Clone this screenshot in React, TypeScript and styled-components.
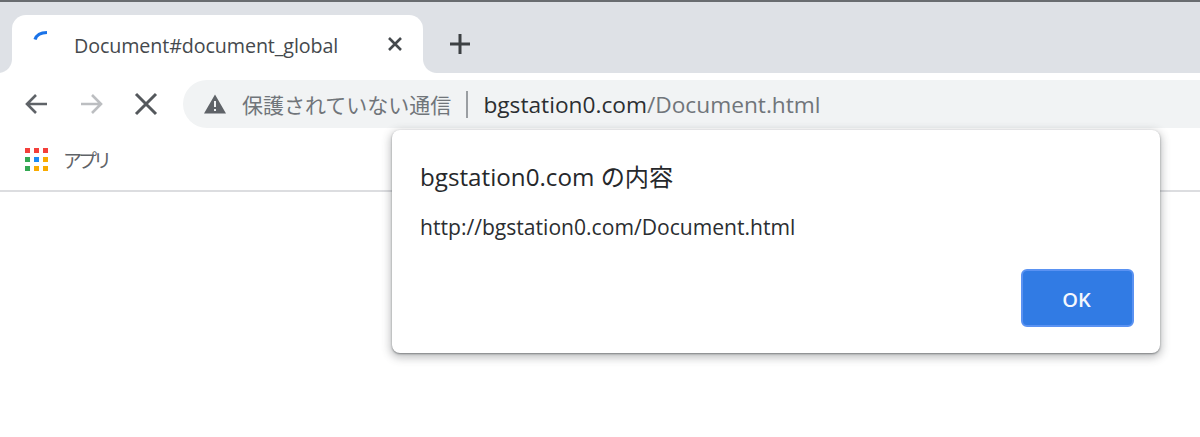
import React from "react";
import styled, { createGlobalStyle } from "styled-components";

const Global = createGlobalStyle`
  html, body { margin: 0; padding: 0; background: #fff; }
  body { width: 1200px; height: 437px; overflow: hidden; font-family: "Open Sans", "Noto Sans CJK JP", sans-serif; }
  #root { width: 1200px; height: 437px; }
`;

const Page = styled.div`
  position: relative;
  width: 1200px;
  height: 437px;
  overflow: hidden;
  background: #fff;
`;

const TabStrip = styled.div`
  box-sizing: border-box;
  border-top: 2px solid #696c70;
  height: 73px;
  padding: 13px 0 0 12px;
  background: #dee1e6;
  display: flex;
  align-items: flex-start;
`;

const Tab = styled.div`
  position: relative;
  box-sizing: border-box;
  width: 411px;
  height: 58px;
  background: #fff;
  border-radius: 14px 14px 0 0;
  display: flex;
  align-items: center;
  padding: 0 20px 0 21px;

  &::before, &::after {
    content: "";
    position: absolute;
    bottom: 0;
    width: 14px;
    height: 14px;
  }
  &::before {
    left: -14px;
    background: radial-gradient(circle at 0 0, #dee1e6 13.5px, #fff 14.5px);
  }
  &::after {
    right: -14px;
    background: radial-gradient(circle at 100% 0, #dee1e6 13.5px, #fff 14.5px);
  }
`;

const Spinner = styled.svg`
  align-self: flex-start;
  margin-top: 14px;
  flex: none;
`;

const TabTitle = styled.span`
  flex: 1;
  margin-left: 25px;
  padding-top: 2px;
  font-size: 19.7px;
  letter-spacing: -0.1px;
  color: #45494d;
  white-space: nowrap;
`;

const NewTab = styled.div`
  margin: 18px 0 0 26px;
  width: 22px;
  height: 28px;
  display: flex;
`;

const Toolbar = styled.div`
  height: 70px;
  box-sizing: border-box;
  padding: 7px 0 15px 0;
  display: flex;
  align-items: center;
`;

const NavButton = styled.div<{ $w: number }>`
  width: ${(p) => p.$w}px;
  height: 48px;
  display: flex;
  align-items: center;
  justify-content: center;
`;

const Omnibox = styled.div`
  flex: 1;
  height: 48px;
  margin-left: 2px;
  background: #f1f3f4;
  border-radius: 24px 0 0 24px;
  display: flex;
  align-items: center;
  padding-left: 21px;
  font-size: 22.7px;
  white-space: nowrap;
`;

const Security = styled.span`
  margin-left: 16px;
  color: #70757a;
  font-size: 21px;
  font-family: "Noto Sans CJK JP", sans-serif;
`;

const Divider = styled.span`
  width: 2px;
  height: 27px;
  margin: 0 15px 0 15px;
  background: #9a9ea2;
`;

const Host = styled.span`
  color: #2b2e31;
`;

const Path = styled.span`
  color: #70757a;
`;

const Bookmarks = styled.div`
  height: 49px;
  box-sizing: border-box;
  border-bottom: 2px solid #dcdde0;
  padding: 0 0 15px 25px;
  display: flex;
  align-items: center;
`;

const AppsGrid = styled.div`
  display: grid;
  grid-template-columns: repeat(3, 5px);
  grid-auto-rows: 5px;
  gap: 4px;
`;

const AppDot = styled.span<{ $c: string }>`
  background: ${(p) => p.$c};
`;

const BookmarkLabel = styled.span`
  margin-left: 15px;
  font-size: 19px;
  letter-spacing: -4px;
  color: #5f6368;
  font-family: "Noto Sans CJK JP", sans-serif;
`;

const Dialog = styled.div`
  position: absolute;
  left: 392px;
  top: 130px;
  width: 768px;
  height: 223px;
  box-sizing: border-box;
  padding: 30px 26px 26px 28px;
  background: #fff;
  border-radius: 8px;
  box-shadow: 0 1px 2px rgba(60, 64, 67, 0.55), 0 3px 8px 2px rgba(60, 64, 67, 0.3);
  display: flex;
  flex-direction: column;
`;

const DialogTitle = styled.div`
  font-size: 24.2px;
  line-height: 34px;
  color: #26282b;
  white-space: nowrap;
`;

const DialogBody = styled.div`
  margin-top: 20px;
  font-size: 21.1px;
  line-height: 26px;
  color: #2b2e31;
  white-space: nowrap;
`;

const Actions = styled.div`
  margin-top: auto;
  display: flex;
  justify-content: flex-end;
`;

const OkButton = styled.button`
  width: 113px;
  height: 58px;
  box-sizing: border-box;
  border: 2px solid #5a92f2;
  border-radius: 6px;
  background: #317be4;
  color: #f4f7fd;
  font-family: "Open Sans", sans-serif;
  font-size: 20px;
  font-weight: 600;
  padding: 2px 2px 0 0;
`;

const colors = ["#f43f3a", "#f43f3a", "#f43f3a", "#34a853", "#1a8cf5", "#f9ab00", "#34a853", "#f9ab00", "#f9ab00"];

export default function App() {
  return (
    <Page>
      <Global />
      <TabStrip>
        <Tab>
          <Spinner width="16" height="14" viewBox="0 0 16 14" fill="none">
            <path d="M2 10.5 C3.5 6 7.5 3.6 14 3.5" stroke="#1a73e8" strokeWidth="3.2" strokeLinecap="butt" />
          </Spinner>
          <TabTitle>Document#document_global</TabTitle>
          <svg width="16" height="16" viewBox="0 0 16 16" fill="none">
            <path d="M2 2 L14 14 M14 2 L2 14" stroke="#45494d" strokeWidth="2.6" />
          </svg>
        </Tab>
        <NewTab>
          <svg width="22" height="22" viewBox="0 0 22 22" fill="none">
            <path d="M11 1 V21 M1 11 H21" stroke="#3c4043" strokeWidth="3" />
          </svg>
        </NewTab>
      </TabStrip>
      <Toolbar>
        <NavButton $w={72}>
          <svg width="24" height="24" viewBox="0 0 24 24" fill="none">
            <path d="M23 12 H3 M12 3 L3 12 L12 21" stroke="#5f6368" strokeWidth="2.6" />
          </svg>
        </NavButton>
        <NavButton $w={39}>
          <svg width="24" height="24" viewBox="0 0 24 24" fill="none">
            <path d="M1 12 H21 M12 3 L21 12 L12 21" stroke="#bcbec1" strokeWidth="2.6" />
          </svg>
        </NavButton>
        <NavButton $w={70}>
          <svg width="24" height="24" viewBox="0 0 24 24" fill="none">
            <path d="M2 2 L22 22 M22 2 L2 22" stroke="#54585c" strokeWidth="3" />
          </svg>
        </NavButton>
        <Omnibox>
          <svg width="22" height="20" viewBox="0 0 22 20">
            <path fillRule="evenodd" fill="#5f6368" d="M0 19.5 L11 0.5 L22 19.5 Z M10 7 V13 H12 V7 Z M10 15 V17 H12 V15 Z" />
          </svg>
          <Security>保護されていない通信</Security>
          <Divider />
          <span>
            <Host>bgstation0.com</Host>
            <Path>/Document.html</Path>
          </span>
        </Omnibox>
      </Toolbar>
      <Bookmarks>
        <AppsGrid>
          {colors.map((c, i) => (
            <AppDot key={i} $c={c} />
          ))}
        </AppsGrid>
        <BookmarkLabel>アプリ</BookmarkLabel>
      </Bookmarks>
      <Dialog>
        <DialogTitle>bgstation0.com の内容</DialogTitle>
        <DialogBody>http://bgstation0.com/Document.html</DialogBody>
        <Actions>
          <OkButton>OK</OkButton>
        </Actions>
      </Dialog>
    </Page>
  );
}
